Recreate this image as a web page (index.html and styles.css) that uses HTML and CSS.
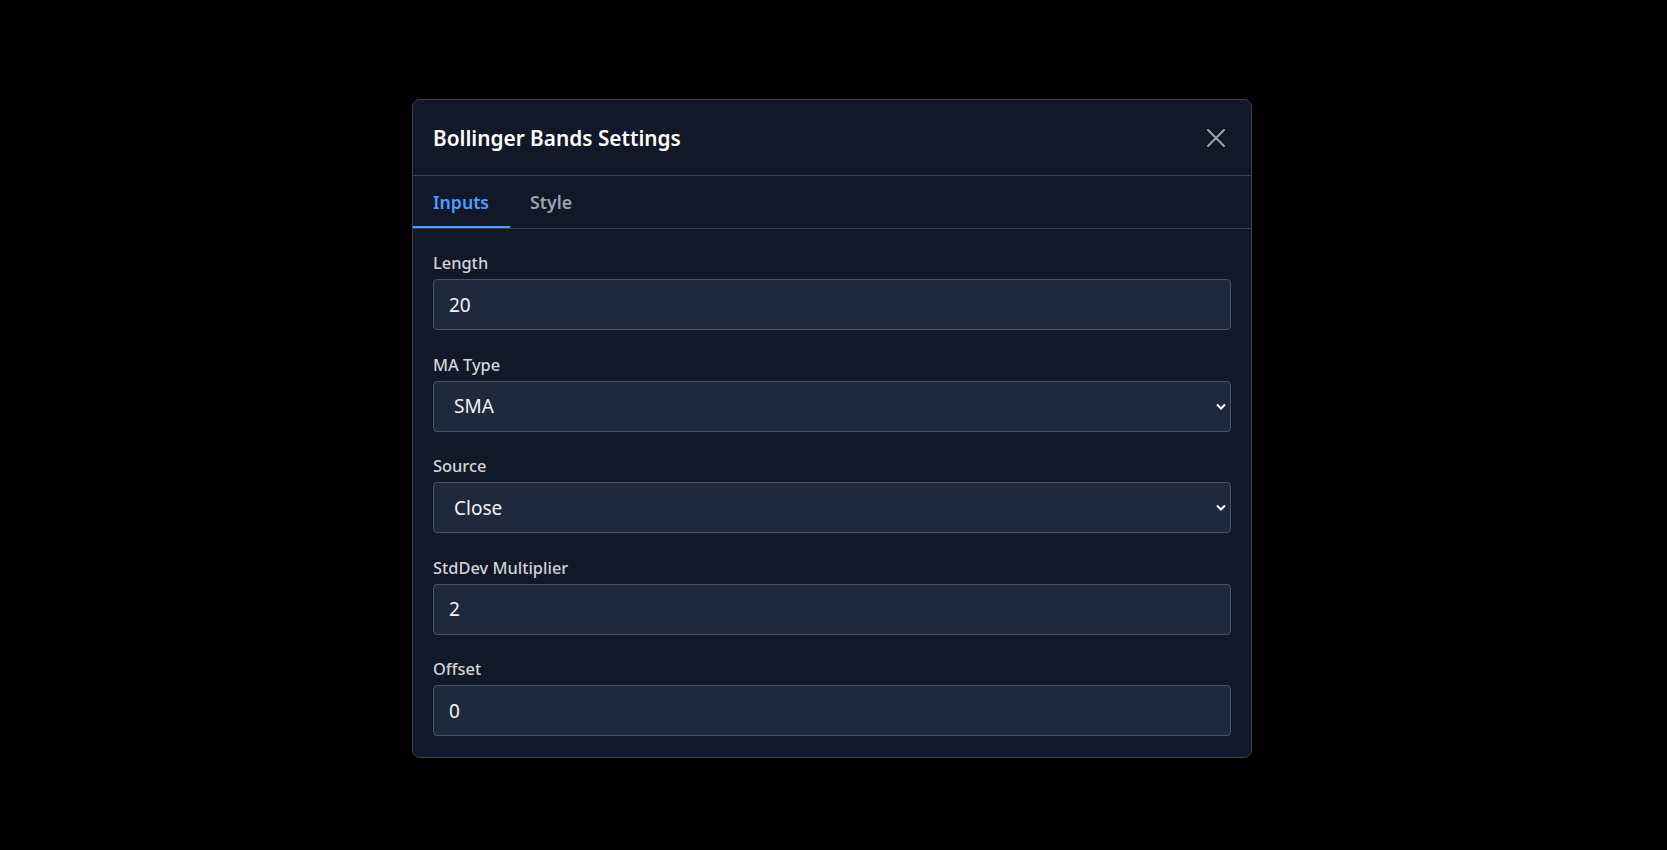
FILE: index.html
```html
<!DOCTYPE html>
<html lang="en">
<head>
<meta charset="utf-8">
<title>Bollinger Bands Settings</title>
<link rel="stylesheet" href="styles.css">
</head>
<body>
<div class="modal">
  <div class="modal-header">
    <h2 class="modal-title">Bollinger Bands Settings</h2>
    <button class="close-btn" aria-label="Close">
      <svg width="18" height="18" viewBox="0 0 18 18"><path d="M1 1L17 17M17 1L1 17" stroke="#9ca3af" stroke-width="2" stroke-linecap="round"/></svg>
    </button>
  </div>
  <div class="tabs">
    <div class="tab active">Inputs</div>
    <div class="tab">Style</div>
  </div>
  <div class="modal-body">
    <div class="field">
      <label class="field-label">Length</label>
      <input class="field-input" type="text" value="20">
    </div>
    <div class="field">
      <label class="field-label">MA Type</label>
      <div class="select-wrap">
        <div class="field-input select">SMA</div>
        <svg class="chevron" width="10" height="7" viewBox="0 0 10 7"><path d="M1 1.5L5 5.5L9 1.5" stroke="#fff" stroke-width="2" fill="none"/></svg>
      </div>
    </div>
    <div class="field">
      <label class="field-label">Source</label>
      <div class="select-wrap">
        <div class="field-input select">Close</div>
        <svg class="chevron" width="10" height="7" viewBox="0 0 10 7"><path d="M1 1.5L5 5.5L9 1.5" stroke="#fff" stroke-width="2" fill="none"/></svg>
      </div>
    </div>
    <div class="field">
      <label class="field-label">StdDev Multiplier</label>
      <input class="field-input" type="text" value="2">
    </div>
    <div class="field">
      <label class="field-label">Offset</label>
      <input class="field-input" type="text" value="0">
    </div>
  </div>
</div>
</body>
</html>
```

FILE: styles.css
```css
* { box-sizing: border-box; }
html, body { margin: 0; height: 100%; }
body {
  background: #000;
  font-family: "Noto Sans", sans-serif;
  display: flex;
  justify-content: center;
  align-items: flex-start;
  padding: 99px 3px 0 0;
}
.modal {
  width: 840px;
  background: #111827;
  border: 1px solid #374151;
  border-radius: 8px;
  display: flex;
  flex-direction: column;
}
.modal-header {
  height: 76px;
  border-bottom: 1px solid #374151;
  display: flex;
  align-items: center;
  justify-content: space-between;
  padding: 0 20px;
}
.modal-title { margin: 0; color: #fff; font-size: 20.8px; font-weight: 600; }
.close-btn {
  width: 30px; height: 30px; padding: 0; border: 0; background: none;
  display: flex; align-items: center; justify-content: center;
}
.tabs { display: flex; border-bottom: 1px solid #374151; }
.tab {
  height: 52px; padding: 2px 20px 0; display: flex; align-items: center;
  font-size: 17.7px; font-weight: 600; color: #9ca3af;
  border-bottom: 2px solid transparent;
}
.tab.active { color: #4a9eff; border-bottom-color: #4a9eff; padding-right: 21px; }
.modal-body { padding: 20px 20px 21px; display: flex; flex-direction: column; gap: 20.5px; }
.field { display: flex; flex-direction: column; }
.field-label {
  color: #d1d5db; font-size: 16.4px; font-weight: 500; line-height: 24px;
  padding-top: 2px; margin-bottom: 4px;
}
.field-input {
  width: 100%; height: 51px; background: #1e293b; border: 1px solid #475569; border-radius: 4px;
  color: #f3f4f6; font-family: inherit; font-size: 19px; padding: 0 15px; outline: none;
  display: flex; align-items: center;
}
.select { padding-left: 20px; }
.select-wrap { position: relative; }
.chevron { position: absolute; right: 5px; top: 22px; }
```
